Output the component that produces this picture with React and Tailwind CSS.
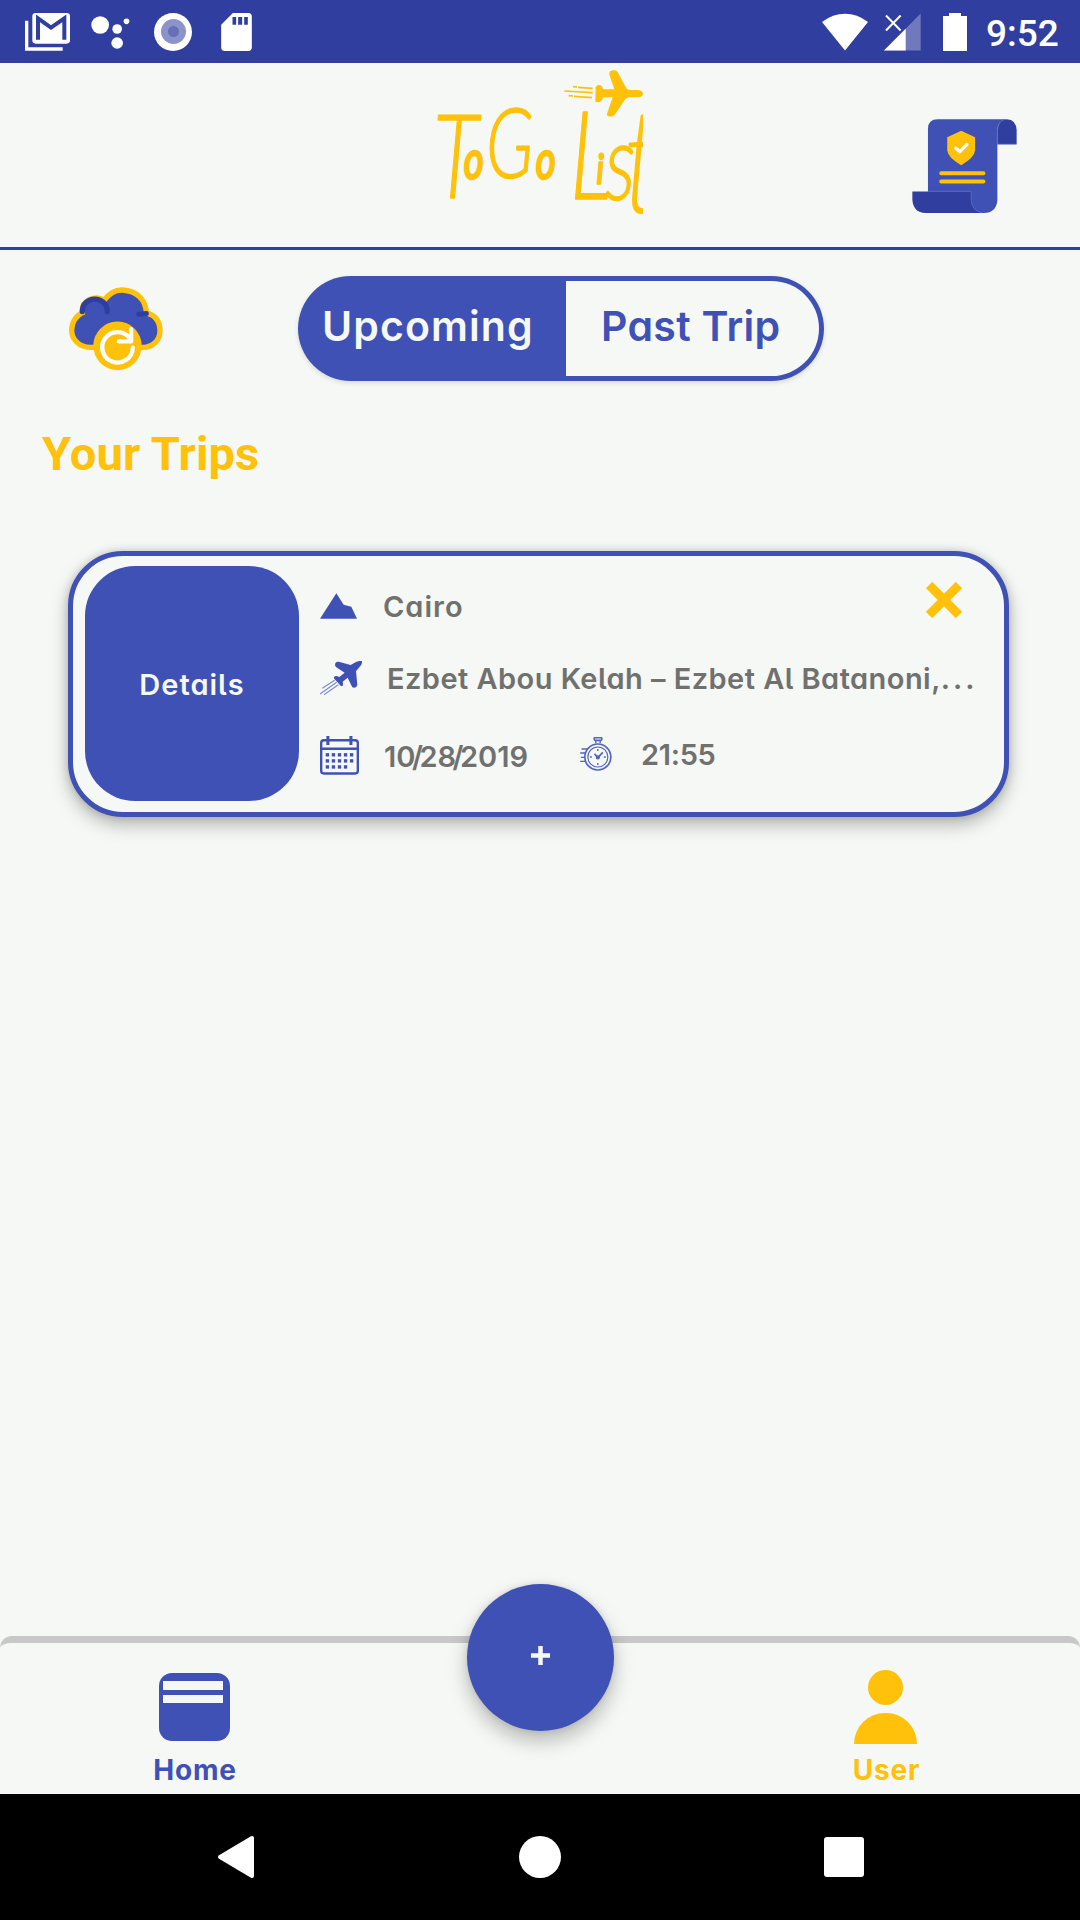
const inter = "font-['Inter',sans-serif] [font-feature-settings:'cv11','cv05'] whitespace-nowrap";

function StatusBar() {
  return (
    <div className="flex h-[63px] items-center bg-[#303f9f] pl-[25px] text-white">
      <svg className="h-[38px] w-[45px]" viewBox="75 37 135 114" fill="none">
        <path d="M80 60V145H188" stroke="#fff" strokeWidth="10" />
        <rect x="97" y="37" width="113" height="92" rx="10" fill="#fff" />
        <path d="M114 117V53L153 81L193 53V117" stroke="#303f9f" strokeWidth="12" />
      </svg>
      <svg className="mt-[2px] ml-[21px] h-[33px] w-[39px]" viewBox="273 47 116 99" fill="#fff">
        <circle cx="300" cy="74" r="26.5" />
        <circle cx="351" cy="86" r="14.5" />
        <circle cx="379" cy="63" r="8.5" />
        <circle cx="351" cy="128" r="17.5" />
      </svg>
      <div className="ml-[24px] flex size-[38px] items-center justify-center rounded-full bg-white">
        <div className="flex size-[25px] items-center justify-center rounded-full bg-[#8b93cb]">
          <div className="size-[11px] rounded-full bg-[#6670b8]" />
        </div>
      </div>
      <svg className="ml-[29px] h-[38px] w-[31px]" viewBox="663 37 92 114">
        <path d="M698 37H744Q755 37 755 48V140Q755 151 744 151H674Q663 151 663 140V72Z" fill="#fff" />
        <path d="M697 49h11v23h-11zM714 49h12v23h-12zM732 49h11v23h-11z" fill="#303f9f" />
      </svg>
      <svg className="ml-[570px] h-[38px] w-[46px]" viewBox="65 38 140 113" fill="#fff">
        <path d="M65 64Q98 39 135 39T205 64L135 151Z" />
      </svg>
      <svg className="ml-[16px] h-[38px] w-[37px]" viewBox="253 38 111 113">
        <path d="M363 39V150H253Z" fill="#7079bb" />
        <path d="M318 85V150H253Z" fill="#fff" />
        <path d="M259 45L303 90M303 45L259 90" stroke="#fff" strokeWidth="6" />
      </svg>
      <svg className="ml-[22px] h-[38px] w-[24px]" viewBox="429 36 72 114" fill="#fff">
        <path d="M447 36h36v9h18v105h-72V45h18z" />
      </svg>
      <span className="mt-[3px] ml-[19px] font-['Roboto',sans-serif] text-[37px] leading-none font-medium">9:52</span>
    </div>
  );
}

function Logo() {
  return (
    <svg className="h-[146px] w-[208px]" viewBox="45 27 624 438" fill="#ffc10a" role="img" aria-label="ToGo List">
      <path d="M527 82q2-8 12-7q8 1 10 13H583L568 44Q566 30 584 31Q590 31 593 37L620 86Q625 90 640 90H655Q669 93 669 101Q669 110 655 112H625Q618 114 612 122L584 165Q575 173 562 167Q560 164 562 158L578 112H549Q547 128 530 127Q524 126 526 120Z" />
      <path d="M459 80l12 1M474 82l44 3M433 93l85 5M446 107l13 1M462 109l54 4" stroke="#ffc10a" strokeWidth="5" />
      <text
        transform="scale(.72 1)"
        fontFamily="Lato, sans-serif"
        fontStyle="italic"
        fontWeight="300"
        stroke="#ffc10a"
        strokeWidth="4"
        strokeLinejoin="round"
      >
        <tspan x="55" y="415" fontSize="350">T</tspan>
        <tspan x="182" y="357" fontSize="160" fontWeight="400" strokeWidth="8">o</tspan>
        <tspan x="275" y="355" fontSize="290">G</tspan>
        <tspan x="482" y="357" fontSize="160" fontWeight="400" strokeWidth="8">o</tspan>
        <tspan> </tspan>
        <tspan x="625" y="416" fontSize="365">L</tspan>
        <tspan x="735" y="372" fontSize="125" fontWeight="700">i</tspan>
        <tspan x="772" y="420" fontSize="320">s</tspan>
        <tspan x="850" y="458" fontSize="440" strokeWidth="0">t</tspan>
      </text>
    </svg>
  );
}

function Header() {
  return (
    <header className="flex h-[187px] items-start border-b-[3px] border-[#303f9f] pt-[6px] pl-[435px]">
      <Logo />
      <svg className="mt-[50px] ml-[269px] h-[94px] w-[105px]" viewBox="66 56 314 283">
        <path d="M113 300V86Q113 57 142 57H350Q322 62 322 90V298Q320 338 281 339H200Z" fill="#3f51b5" />
        <path d="M322 132V90Q324 57 351 57Q378 58 380 90V132Z" fill="#303f9f" />
        <path d="M66 274H243V300Q246 336 280 339H106Q68 337 66 298Z" fill="#303f9f" />
        <path d="M113 274H243V300Q246 334 276 338M322 132V90Q324 62 345 57M322 132H380" fill="none" stroke="#6675c6" strokeWidth="2" />
        <path d="M213 91L255 111V150Q253 172 213 195Q173 172 171 150V111Z" fill="#ffc10a" />
        <path d="M197 144l12 10l21-21" fill="none" stroke="#fff" strokeWidth="10" strokeLinecap="round" />
        <path d="M153 219.500H280M153 244H280" stroke="#ffc10a" strokeWidth="12" strokeLinecap="round" />
      </svg>
    </header>
  );
}

function SyncCloud() {
  return (
    <svg className="h-[83px] w-[94px]" viewBox="57 50 283 250" fill="none">
      <path
        d="M97 128C92 88 140 72 163 90Q186 58 218 59C262 62 288 88 290 128C320 136 331 156 331 182C331 212 308 231 280 232H120C88 231 65 208 65 180C65 156 78 136 97 128Z"
        fill="#3f51b5"
        stroke="#ffc10a"
        strokeWidth="16"
      />
      <path d="M97 124C97 74 172 74 172 124" fill="#3f51b5" stroke="#303f9f" strokeWidth="16" strokeLinecap="round" />
      <path d="M267 132L290 130" stroke="#303f9f" strokeWidth="15" strokeLinecap="round" />
      <circle cx="203" cy="227" r="73" fill="#ffc10a" />
      <path d="M249 233A46 46 0 1 1 239 203M244 177V214H207" stroke="#fff" strokeWidth="13" strokeLinecap="round" strokeLinejoin="round" />
    </svg>
  );
}

function Controls() {
  return (
    <div className="flex items-start pt-[26px] pl-[69px]">
      <div className="mt-[11px]">
        <SyncCloud />
      </div>
      <div className={`ml-[135px] flex h-[105px] rounded-[53px] text-[41px] font-semibold shadow-[0_2px_5px_rgba(0,0,0,0.12)] ${inter}`}>
        <div className="flex w-[268px] items-center rounded-l-[53px] bg-[#3f51b5] pb-[4px] pl-[24px] tracking-[1.1px] text-[#f5f8f5]">Upcoming</div>
        <div className="flex w-[258px] items-center rounded-r-[53px] border-y-[5px] border-r-[5px] border-[#3f51b5] pb-[4px] pl-[35px] tracking-[0.3px] text-[#3f51b5]">Past Trip</div>
      </div>
    </div>
  );
}

function MountainIcon() {
  return (
    <svg className="h-[26px] w-[37px]" viewBox="60 67 111 77" fill="#3f51b5">
      <path d="M60 144L109 67L131 102L154 108L171 144Z" />
    </svg>
  );
}

function FlightIcon() {
  return (
    <svg className="h-[34px] w-[42px]" viewBox="60 270 126 102" fill="#3f51b5">
      <path d="M105 282Q105 271 116 272L152 282L168 273Q180 268 186 270Q187 279 181 285L168 301L172 342Q170 350 163 350Q157 351 155 345L143 320L128 332Q131 342 126 346Q121 346 118 340L104 325Q100 321 103 317Q107 313 118 318L134 305L109 289Q105 286 105 282Z" />
      <path d="M67 352L104 328M60 369L110 334M72 371L115 341" stroke="#7f8bce" strokeWidth="3.500" />
    </svg>
  );
}

const calendarDots = [
  [82, 554], [100, 554], [118, 554], [136, 554], [154, 554],
  [82, 572], [100, 572], [118, 572], [136, 572], [154, 572],
  [82, 590], [100, 590], [118, 590], [136, 590],
];

function CalendarIcon() {
  return (
    <svg className="h-[39px] w-[39px]" viewBox="60 498 116 116" fill="none" stroke="#3f51b5">
      <rect x="63.500" y="510.500" width="109" height="99" rx="8" strokeWidth="7" />
      <path d="M64 536H172" strokeWidth="7" />
      <path d="M83.500 498V525M152 498V525" strokeWidth="9" />
      {calendarDots.map(([x, y]) => (
        <rect key={`${x}-${y}`} x={x - 5} y={y - 5} width="10" height="10" fill="#3f51b5" stroke="none" />
      ))}
    </svg>
  );
}

function StopwatchIcon() {
  return (
    <svg className="h-[34px] w-[32px]" viewBox="123 588 95 102" fill="none" stroke="#5464c0" strokeWidth="5">
      <circle cx="176" cy="648" r="39" />
      <circle cx="176" cy="648" r="30" strokeWidth="3.500" />
      <rect x="165" y="590" width="23" height="8" rx="3" />
      <path d="M170 598V607M183 598V607M127 624H146M123 636H139M125 649H136M123 661H139M176 624V630M176 666V672M152 648H158M194 648H200" strokeWidth="4" />
      <path d="M166 638L176 650L191 634" />
      <circle cx="176" cy="649" r="4" />
    </svg>
  );
}

function TripCard() {
  return (
    <div className="mx-[68px] flex h-[266px] w-[941px] rounded-[55px] border-[5px] border-[#3f51b5] bg-[#f5f8f5] shadow-[0_8px_18px_rgba(0,0,0,0.26),0_0_8px_rgba(0,0,0,0.16)]">
      <div className={`mt-[10px] ml-[12px] flex h-[235px] w-[214px] items-center justify-center rounded-[50px] bg-[#3f51b5] pt-[2px] text-[29px] font-semibold tracking-[1px] text-[#f5f8f5] ${inter}`}>
        Details
      </div>
      <div className={`ml-[21px] flex flex-1 flex-col text-[29px] font-semibold text-[#70716f] ${inter}`}>
        <div className="flex h-[100px] items-center">
          <MountainIcon />
          <span className="mt-[2px] ml-[26px] tracking-[1px]">Cairo</span>
          <svg className="mr-[42px] mb-[12px] ml-auto size-[36px]" viewBox="0 0 36 36">
            <path d="M3 3L33 33M33 3L3 33" stroke="#ffc10a" strokeWidth="9" />
          </svg>
        </div>
        <div className="flex h-[43px] items-center">
          <FlightIcon />
          <span className="mt-[2px] ml-[25px] tracking-[0.45px]">
            Ezbet Abou Kelah – Ezbet Al Batanoni,<span className="tracking-[3px]">...</span>
          </span>
        </div>
        <div className="flex h-[113px] items-center">
          <CalendarIcon />
          <span className="mt-[2px] ml-[25px] w-[196px]">
            10<span className="-mx-[3.5px]">/</span>28<span className="-mx-[3.5px]">/</span>2019
          </span>
          <div className="mb-[4px] flex items-center">
            <StopwatchIcon />
            <span className="mt-[2px] ml-[29px] tracking-[-0.3px]">21:55</span>
          </div>
        </div>
      </div>
    </div>
  );
}

function BottomBar() {
  return (
    <div className={`relative flex h-[158px] justify-between rounded-t-[12px] border-t-[7px] border-[#c8c8c8] text-[28px] leading-[34px] font-bold tracking-[0.8px] ${inter}`}>
      <div className="ml-[134px] flex w-[120px] flex-col items-center pt-[30px] text-[#3f51b5]">
        <div className="flex h-[68px] w-[71px] flex-col gap-[5px] rounded-[13px] bg-[#3f51b5] pt-[8px] pl-[4px]">
          <div className="h-[9px] w-[60px] bg-[#f5f8f5]" />
          <div className="h-[8px] w-[60px] bg-[#f5f8f5]" />
        </div>
        <span className="mt-[12px] ml-[2px]">Home</span>
      </div>
      <div className="absolute top-[-59px] left-[467px] flex size-[147px] items-center justify-center rounded-full bg-[#3f51b5] shadow-[0_10px_20px_rgba(0,0,0,0.25),0_0_6px_rgba(0,0,0,0.1)]">
        <svg className="mb-[4px] size-[19px]" viewBox="0 0 19 19">
          <path d="M9.500 0V19M0 9.500H19" stroke="#f5f8f5" strokeWidth="4.500" />
        </svg>
      </div>
      <div className="mr-[135px] flex w-[120px] flex-col items-center pt-[27px] text-[#ffc10a]">
        <div className="size-[35px] rounded-full bg-[#ffc10a]" />
        <div className="mt-[8px] h-[31px] w-[63px] rounded-t-full bg-[#ffc10a]" />
        <span className="mt-[9px] ml-[3px]">User</span>
      </div>
    </div>
  );
}

function SystemNav() {
  return (
    <div className="flex h-[126px] items-center bg-black pl-[217px]">
      <svg className="h-[44px] w-[38px]" viewBox="0 0 38 44">
        <path d="M35 3V41L3 22Z" fill="#fff" stroke="#fff" strokeWidth="4" strokeLinejoin="round" />
      </svg>
      <div className="ml-[264px] size-[42px] rounded-full bg-white" />
      <div className="ml-[263px] size-[40px] rounded-[3px] bg-white" />
    </div>
  );
}

export default function App() {
  return (
    <div className="flex h-[1920px] w-[1080px] flex-col overflow-hidden bg-[#f5f8f5]">
      <StatusBar />
      <Header />
      <Controls />
      <h1 className="mt-[43px] mb-[67px] ml-[42px] h-[60px] font-['Roboto',sans-serif] text-[47px] leading-[60px] font-bold tracking-[0.15px] text-[#ffc10a]">Your Trips</h1>
      <TripCard />
      <div className="mt-auto">
        <BottomBar />
        <SystemNav />
      </div>
    </div>
  );
}
